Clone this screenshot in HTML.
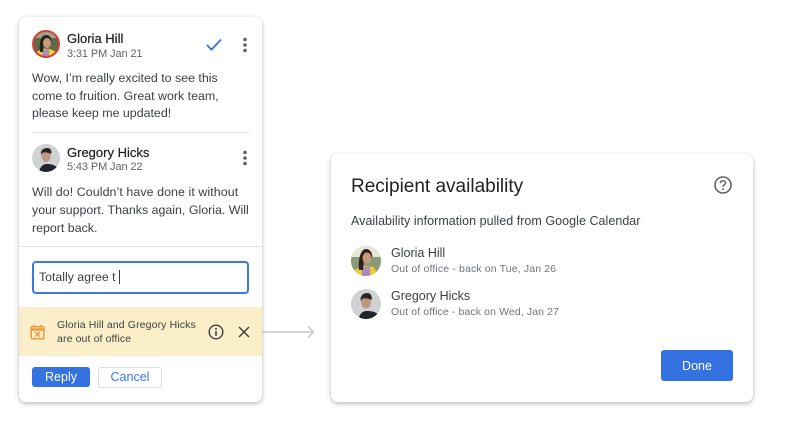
<!DOCTYPE html>
<html>
<head>
<meta charset="utf-8">
<style>
html,body{margin:0;padding:0;background:#fff;}
body{width:788px;height:443px;overflow:hidden;position:relative;font-family:"Liberation Sans",sans-serif;color:#3c4043;}
#w{position:absolute;left:0;top:0;width:788px;height:443px;filter:blur(.3px);}
.t{position:absolute;white-space:nowrap;line-height:1;}
.card{position:absolute;background:#fff;border-radius:7px;box-shadow:0 2px 5px rgba(60,64,67,.3),0 0 3px rgba(60,64,67,.1);}
svg{position:absolute;overflow:visible;}
.b{font-size:12.4px;}
</style>
</head>
<body>
<div id="w">
<div class="card" style="left:19px;top:17px;width:243px;height:385px;"></div>
<div class="card" style="left:331px;top:154px;width:422px;height:248px;"></div>

<svg style="left:31px;top:29px" width="30" height="30" viewBox="0 0 30 30">
<defs><clipPath id="a1"><circle cx="15" cy="15" r="12.5"/></clipPath></defs>
<circle cx="15" cy="15" r="14" fill="#fff"/>
<g clip-path="url(#a1)">
<rect width="30" height="30" fill="#5f6a48"/>
<rect x="0" y="0" width="30" height="9" fill="#9aa58c"/>
<path d="M5 30V23L12 19.5L19 20L25 23V30Z" fill="#f0d03f"/>
<path d="M11.5 30V20.5H18V30Z" fill="#a98bbd"/>
<path d="M9 23C8 13 10 6 15 6C20 6 21 11 20 14H13L12 23Z" fill="#2b211e"/>
<ellipse cx="16" cy="14" rx="4" ry="5" fill="#c99a7c"/>
</g>
<circle cx="15" cy="15" r="13" fill="none" stroke="#d9402f" stroke-width="2"/>
</svg>
<div class="t" style="left:67px;top:32px;font-size:13px;color:#202124;-webkit-text-stroke:.2px #202124;">Gloria Hill</div>
<div class="t" style="left:67px;top:49px;font-size:11px;color:#5f6368;letter-spacing:-.12px;">3:31 PM Jan 21</div>
<svg style="left:205px;top:38px" width="18" height="14" viewBox="0 0 18 14"><path d="M2 7L6.5 11.6L16 1.5" fill="none" stroke="#3b78e7" stroke-width="1.9"/></svg>
<svg style="left:242px;top:37px" width="6" height="16" viewBox="0 0 6 16"><circle cx="3" cy="2.5" r="1.8" fill="#5f6368"/><circle cx="3" cy="8" r="1.8" fill="#5f6368"/><circle cx="3" cy="13.5" r="1.8" fill="#5f6368"/></svg>
<div class="t b" style="left:32px;top:72px;">Wow, I’m really excited to see this</div>
<div class="t b" style="left:32px;top:90px;">come to fruition. Great work team,</div>
<div class="t b" style="left:32px;top:107px;">please keep me updated!</div>
<div style="position:absolute;left:32px;top:132px;width:217px;height:1px;background:#dadce0;"></div>

<svg style="left:32px;top:144px" width="28" height="28" viewBox="0 0 28 28">
<defs><clipPath id="a2"><circle cx="14" cy="14" r="14"/></clipPath></defs>
<g clip-path="url(#a2)">
<rect width="28" height="28" fill="#cfd3d4"/>
<path d="M7 28C8 22 12 20 14 20C20 20 26 21 26 28Z" fill="#20252b"/>
<ellipse cx="14" cy="12" rx="4.5" ry="6" fill="#c09682"/>
<path d="M9 11C8 6 12 4 15 4C19 4 20 7 19 10C16 8 12 8 10 9Z" fill="#2a2422"/>
</g>
</svg>
<div class="t" style="left:67px;top:146px;font-size:13px;color:#202124;-webkit-text-stroke:.2px #202124;">Gregory Hicks</div>
<div class="t" style="left:67px;top:162px;font-size:11px;color:#5f6368;letter-spacing:-.12px;">5:43 PM Jan 22</div>
<svg style="left:242px;top:150px" width="6" height="16" viewBox="0 0 6 16"><circle cx="3" cy="2.5" r="1.8" fill="#5f6368"/><circle cx="3" cy="8" r="1.8" fill="#5f6368"/><circle cx="3" cy="13.5" r="1.8" fill="#5f6368"/></svg>
<div class="t b" style="left:32px;top:186px;letter-spacing:.08px;">Will do! Couldn’t have done it without</div>
<div class="t b" style="left:32px;top:204px;">your support. Thanks again, Gloria. Will</div>
<div class="t b" style="left:32px;top:222px;">report back.</div>
<div style="position:absolute;left:19px;top:246px;width:243px;height:1px;background:#e3e4e6;"></div>

<div style="position:absolute;left:32px;top:261px;width:213px;height:29px;border:2px solid #3b78e7;border-radius:4px;"></div>
<div class="t" style="left:39px;top:271px;font-size:12.3px;">Totally agree t</div>
<div style="position:absolute;left:119px;top:270px;width:1px;height:14px;background:#3c4043;"></div>

<div style="position:absolute;left:19px;top:307px;width:243px;height:49px;background:#fbefc9;"></div>
<svg style="left:30px;top:324px" width="15" height="16" viewBox="0 0 15 16">
<rect x="1.2" y="2.7" width="12.6" height="12" rx="1" fill="none" stroke="#ea9a3e" stroke-width="1.5"/>
<path d="M1 5.5H14" stroke="#ea9a3e" stroke-width="2.5"/>
<path d="M4 .8V3M11 .8V3" stroke="#ea9a3e" stroke-width="1.5"/>
<path d="M5 8L10 12.6M10 8L5 12.6" stroke="#ea9a3e" stroke-width="1.3"/>
</svg>
<div class="t" style="left:57px;top:320px;font-size:10.5px;letter-spacing:.12px;">Gloria Hill and Gregory Hicks</div>
<div class="t" style="left:57px;top:334px;font-size:10.5px;letter-spacing:.12px;">are out of office</div>
<svg style="left:208px;top:324px" width="16" height="16" viewBox="0 0 16 16">
<circle cx="8" cy="8" r="6.8" fill="none" stroke="#3c4043" stroke-width="1.4"/>
<path d="M8 7V12" stroke="#3c4043" stroke-width="1.5"/><circle cx="8" cy="4.8" r="1" fill="#3c4043"/>
</svg>
<svg style="left:238px;top:326px" width="12" height="12" viewBox="0 0 12 12"><path d="M1 1L11 11M11 1L1 11" stroke="#3c4043" stroke-width="1.5"/></svg>

<div style="position:absolute;left:32px;top:367px;width:58px;height:20px;background:#3372e0;border-radius:3px;"></div>
<div class="t" style="left:32px;top:371px;width:58px;text-align:center;font-size:12.5px;color:#fff;">Reply</div>
<div style="position:absolute;left:98px;top:367px;width:62px;height:19px;border:1px solid #dadce0;border-radius:3px;background:#fff;"></div>
<div class="t" style="left:98px;top:371px;width:64px;text-align:center;font-size:12.5px;color:#3b78e7;">Cancel</div>

<svg style="left:262px;top:324px" width="54" height="16" viewBox="0 0 54 16"><path d="M0 8H51M46 2.5L51.5 8L46 13.5" fill="none" stroke="#c4c7ca" stroke-width="1.5"/></svg>

<div class="t" style="left:351px;top:177px;font-size:19px;color:#202124;">Recipient availability</div>
<svg style="left:714px;top:176px" width="18" height="18" viewBox="0 0 18 18">
<circle cx="9" cy="9" r="8" fill="none" stroke="#5f6368" stroke-width="1.6"/>
<path d="M6.4 7.2C6.4 5.6 7.6 4.7 9 4.7C10.5 4.7 11.6 5.6 11.6 6.9C11.6 8.7 9 8.7 9 10.9" fill="none" stroke="#5f6368" stroke-width="1.5"/>
<circle cx="9" cy="13.2" r="1" fill="#5f6368"/>
</svg>
<div class="t" style="left:351px;top:215px;font-size:12.5px;letter-spacing:.04px;">Availability information pulled from Google Calendar</div>

<svg style="left:351px;top:246px" width="30" height="30" viewBox="0 0 30 30">
<defs><clipPath id="a3"><circle cx="15" cy="15" r="15"/></clipPath></defs>
<g clip-path="url(#a3)">
<rect width="30" height="30" fill="#8b9a76"/>
<rect y="0" width="30" height="11" fill="#e5e6d6"/>
<path d="M3 30V24L13 20L23 21L27 30Z" fill="#eecb3a"/>
<path d="M11 30V21H19V30Z" fill="#a98bbd"/>
<path d="M8 24C7 12 10 3 15 3C20 3 22 9 21 12H13L12 24Z" fill="#2b211e"/>
<ellipse cx="16" cy="12" rx="4.5" ry="5.5" fill="#c99a7c"/>
</g>
</svg>
<div class="t" style="left:391px;top:247px;font-size:12.5px;">Gloria Hill</div>
<div class="t" style="left:391px;top:264px;font-size:10.5px;color:#70757a;letter-spacing:.14px;">Out of office - back on Tue, Jan 26</div>

<svg style="left:351px;top:289px" width="30" height="30" viewBox="0 0 30 30">
<defs><clipPath id="a4"><circle cx="15" cy="15" r="15"/></clipPath></defs>
<g clip-path="url(#a4)">
<rect width="30" height="30" fill="#cfd3d4"/>
<path d="M8 30C8 24 13 22 15 22C22 22 28 23 28 30Z" fill="#20252b"/>
<ellipse cx="15" cy="13" rx="5" ry="6.5" fill="#c09682"/>
<path d="M9.5 12C9 6 13 4 16 4C20 4 21.5 8 20.5 11C17 9 13 9 11 10Z" fill="#2a2422"/>
</g>
</svg>
<div class="t" style="left:391px;top:290px;font-size:12.5px;">Gregory Hicks</div>
<div class="t" style="left:391px;top:307px;font-size:10.5px;color:#70757a;letter-spacing:.11px;">Out of office - back on Wed, Jan 27</div>

<div style="position:absolute;left:661px;top:350px;width:72px;height:31px;background:#3372e0;border-radius:3px;"></div>
<div class="t" style="left:661px;top:360px;width:72px;text-align:center;font-size:12.5px;color:#fff;">Done</div>
</div>
</body>
</html>
